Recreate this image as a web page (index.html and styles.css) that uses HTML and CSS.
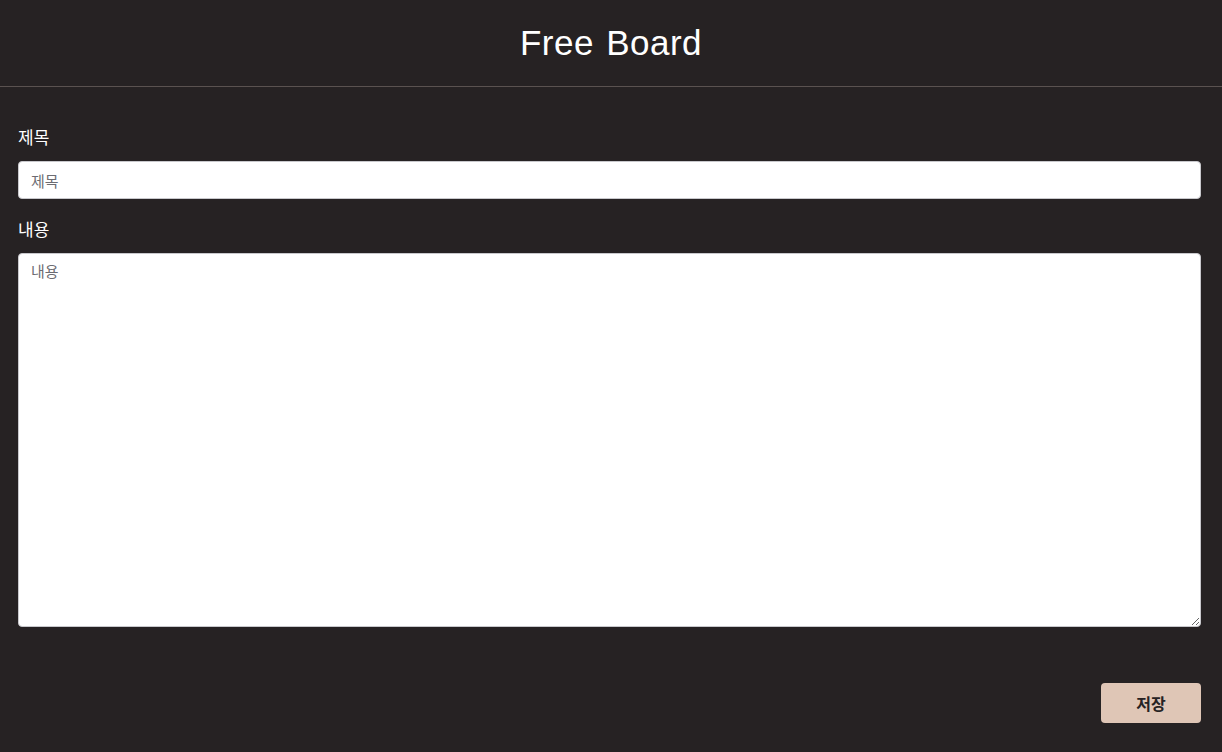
FILE: index.html
```html
<!DOCTYPE html>
<html lang="ko">
<head>
<meta charset="utf-8">
<link rel="stylesheet" href="styles.css">
</head>
<body>
<header class="header"><h1 class="title">Free Board</h1></header>
<main class="form">
  <label class="label" for="t">제목</label>
  <input class="input" id="t" type="text" placeholder="제목">
  <label class="label" for="c">내용</label>
  <textarea class="textarea" id="c" placeholder="내용"></textarea>
  <div class="actions"><button class="save">저장</button></div>
</main>
</body>
</html>
```
FILE: styles.css
```css
* { box-sizing: border-box; }
html, body { margin: 0; background: #262223; height: 100%; }
body { font-family: "Liberation Sans", "Noto Sans CJK KR", sans-serif; color: #fff; }
.header { height: 87px; border-bottom: 1px solid #5a5250; display: flex; align-items: center; justify-content: center; }
.title { margin: 0; font-weight: 400; font-size: 35px; letter-spacing: 0.5px; word-spacing: 2px; }
.form { padding: 24px 21px 0 18px; display: flex; flex-direction: column; }
.label { font-family: "Noto Sans CJK KR", sans-serif; font-size: 17px; line-height: 26px; padding: 13px 0 11px; }
.input + .label { padding-top: 17px; }
.input { height: 38px; border: 1px solid #c8c8cc; border-radius: 4px; background: #fff; padding: 0 12px; font-family: "Noto Sans CJK KR", sans-serif; font-size: 15px; }
.input::placeholder, .textarea::placeholder { color: #6c6c72; }
.textarea { height: 374px; border: 1px solid #c8c8cc; border-radius: 4px; background: #fff; padding: 6px 12px; font-family: "Noto Sans CJK KR", sans-serif; font-size: 15px; resize: vertical; }
.actions { display: flex; justify-content: flex-end; margin-top: 56px; }
.save { width: 100px; height: 40px; border: 0; border-radius: 4px; background: #dfc6b6; color: #262223; font-family: "Noto Sans CJK KR", sans-serif; font-size: 16px; font-weight: 700; }
```
